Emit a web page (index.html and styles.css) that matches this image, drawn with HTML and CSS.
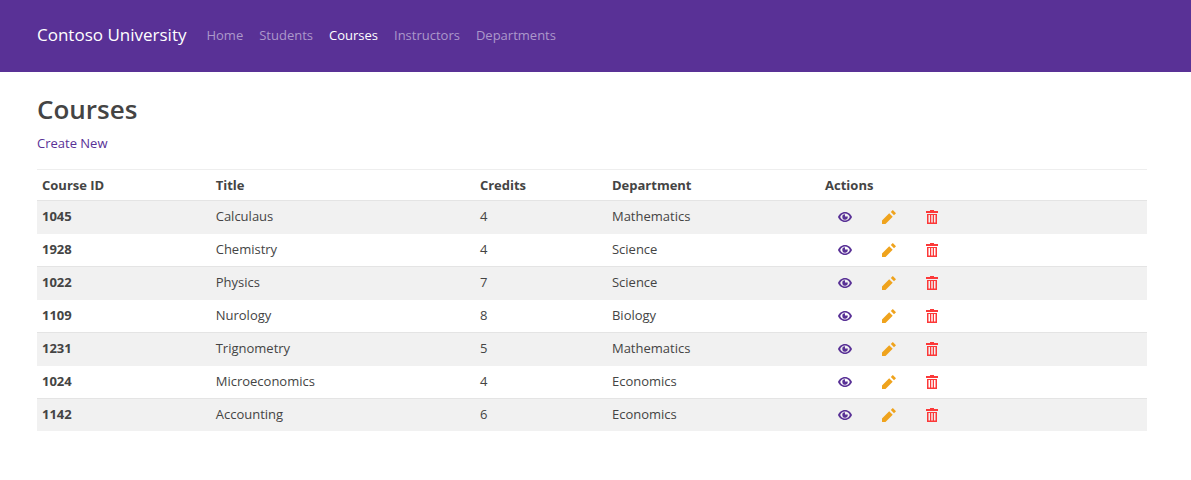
FILE: index.html
```html
<!DOCTYPE html>
<html lang="en">
<head>
<meta charset="utf-8">
<meta name="viewport" content="width=device-width, initial-scale=1">
<title>Courses - Contoso University</title>
<link rel="stylesheet" href="styles.css">
</head>
<body>
<svg class="sprite" aria-hidden="true">
  <symbol id="eye" viewBox="0 0 14 10"><path fill-rule="evenodd" d="M7 0C3.500 0 1 2.500 0 5c1 2.500 3.500 5 7 5s6-2.500 7-5c-1-2.500-3.500-5-7-5zM7 1.500c2.400 0 4 1.500 4.800 3.500c-.8 2-2.400 3.500-4.800 3.500s-4-1.500-4.800-3.500c.8-2 2.400-3.500 4.800-3.500zM7 2.300v2.300h2.300l.3-.3a2.700 2.700 0 1 1-2.600-2z"/></symbol>
  <symbol id="pencil" viewBox="0 0 14 14"><path d="M0 10.500V14h3.500l7.200-7.200L7.200 3.300zM10.800 0L8.800 2L12 5.200L14 3.200z"/></symbol>
  <symbol id="trash" viewBox="0 0 12 14"><path fill-rule="evenodd" d="M4 0h4v1h4v2H0V1h4zM1 4h10v10H1zM2.500 5v7.500H4V5zM5.250 5v7.500h1.500V5zM8 5v7.500h1.500V5z"/></symbol>
</svg>
<header class="navbar">
  <a class="brand" href="#">Contoso University</a>
  <nav class="nav">
    <a href="#">Home</a>
    <a href="#">Students</a>
    <a class="active" href="#" aria-current="page">Courses</a>
    <a href="#">Instructors</a>
    <a href="#">Departments</a>
  </nav>
</header>
<main class="content">
  <h1>Courses</h1>
  <a class="create" href="#">Create New</a>
  <table class="courses">
    <colgroup><col class="col-id"><col class="col-title"><col class="col-credits"><col class="col-dept"><col></colgroup>
    <thead>
      <tr><th scope="col">Course ID</th><th scope="col">Title</th><th scope="col">Credits</th><th scope="col">Department</th><th scope="col">Actions</th></tr>
    </thead>
    <tbody id="rows"></tbody>
  </table>
</main>
<script src="courses.js"></script>
</body>
</html>
```
FILE: courses.js
```js
const courses = [
  [1045, "Calculaus", 4, "Mathematics"],
  [1928, "Chemistry", 4, "Science"],
  [1022, "Physics", 7, "Science"],
  [1109, "Nurology", 8, "Biology"],
  [1231, "Trignometry", 5, "Mathematics"],
  [1024, "Microeconomics", 4, "Economics"],
  [1142, "Accounting", 6, "Economics"]
];

const action = (icon, label, title) =>
  `<a class="action ${icon}" href="#" aria-label="${label} ${title}"><svg aria-hidden="true"><use href="#${icon}"/></svg></a>`;

document.getElementById("rows").innerHTML = courses.map(([id, title, credits, dept]) => `
  <tr>
    <th scope="row">${id}</th><td>${title}</td><td>${credits}</td><td>${dept}</td>
    <td><div class="actions">${action("eye", "View", title)}${action("pencil", "Edit", title)}${action("trash", "Delete", title)}</div></td>
  </tr>`).join("");
```
FILE: styles.css
```css
* { box-sizing: border-box; }
body {
  margin: 0;
  background: #fff;
  color: #444;
  font: 13px/22px "Segoe UI", "Open Sans", "Noto Sans", sans-serif;
}
a { color: #593196; text-decoration: none; }
.sprite { display: none; }

.navbar {
  display: flex;
  align-items: center;
  gap: 20px;
  min-height: 72px;
  padding: 16px 37px 18px;
  background: #593196;
}
.brand { color: #fff; font-size: 17px; line-height: 26px; }
.nav { display: flex; flex-wrap: wrap; gap: 16px; }
.nav a { color: #ac98cb; }
.nav .active { color: #fff; }

.content { padding: 20px 44px 20px 37px; }
h1 { margin: 0 0 7px; font-size: 26px; line-height: 34px; font-weight: 600; }
.create { display: block; margin: 0 0 16px; line-height: 20px; }

.courses {
  width: 100%;
  table-layout: fixed;
  border-spacing: 0;
  line-height: 22px;
}
.col-id { width: 15.65%; }
.col-title { width: 23.8%; }
.col-credits { width: 11.9%; }
.col-dept { width: 19.2%; }
.courses th, .courses td {
  padding: 4px 5px 6px;
  border-top: 1px solid #e4e4e4;
  text-align: left;
  vertical-align: top;
}
.courses thead th { padding: 4px 5px; border-top-color: #eee; }
.courses th { font-weight: 700; }
.courses tbody tr:nth-child(odd) { background: #f1f1f1; }
.courses tbody tr:nth-child(even) > * { border-top-color: #f1f1f1; }
.actions { display: flex; }
.action { display: flex; flex: 0 0 43px; height: 24px; margin-bottom: -2px; align-items: center; justify-content: center; }
.action:first-child { flex-basis: 40px; margin-right: 2px; }
.action svg { width: 14px; height: 14px; fill: currentColor; }
.eye { color: #593196; }
.eye svg { height: 10px; }
.pencil { color: #efa31d; }
.trash { color: #fc3939; }
```
